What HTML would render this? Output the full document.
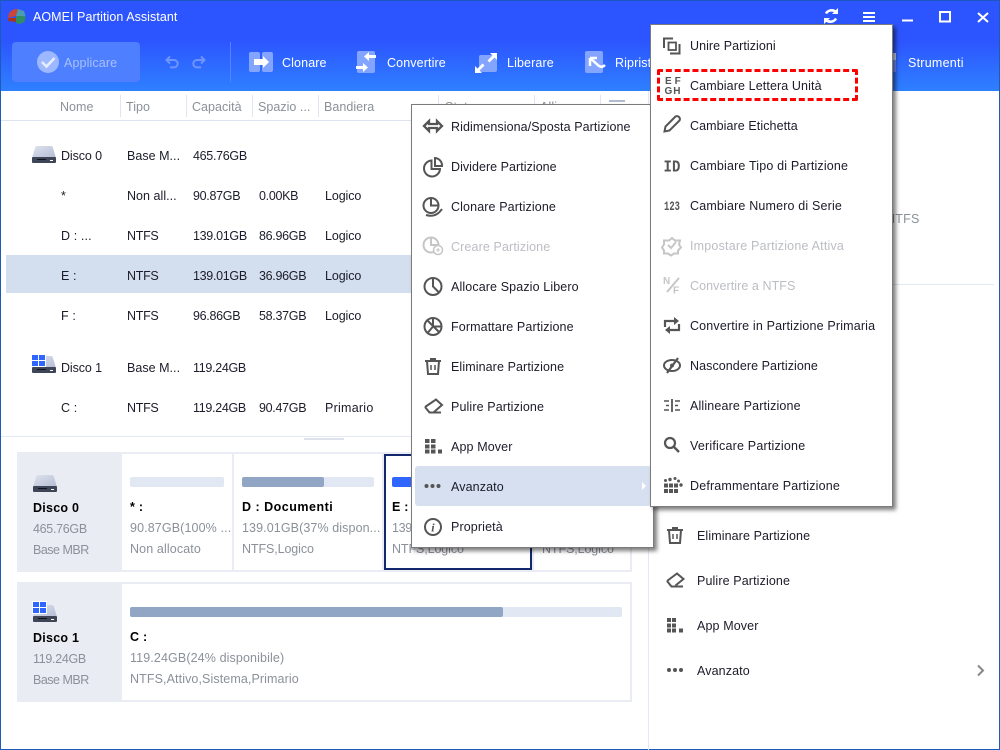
<!DOCTYPE html>
<html><head><meta charset="utf-8"><title>AOMEI Partition Assistant</title>
<style>
html,body{margin:0;padding:0;background:#fff}
#w{position:relative;width:1000px;height:750px;overflow:hidden;background:#fff;font-family:"Liberation Sans",sans-serif;font-size:12.5px;color:#1c1c2a;letter-spacing:.12px}
#w div{position:absolute}
.t{position:absolute;white-space:nowrap;line-height:16px;margin-top:1px}
.g{color:#8b9099}
.b{font-weight:bold;color:#000;letter-spacing:.25px}
.w{color:#fff}
.d{color:#bcbec4}
.n{letter-spacing:-.3px}
.c{letter-spacing:-.1px}
.h{letter-spacing:.03px}
svg{position:absolute;left:0;top:0}
.m{background:#fff;border:1px solid #7b7b7b;box-sizing:border-box;box-shadow:3px 3px 4px rgba(0,0,0,.5)}
</style></head><body><div id="w">
<div style="left:0;top:0;width:1000px;height:91px;background:linear-gradient(#2d55ff 0,#2d55ff 45%,#2e80ff 100%)"></div>
<div style="left:0;top:0;width:1000px;height:1px;background:#1c57c0"></div>
<div style="left:0;top:0;width:1px;height:750px;background:#1b5cb8"></div>
<div style="left:999px;top:0;width:1px;height:750px;background:#1b5cb8"></div>
<div style="left:0;top:749px;width:1000px;height:1px;background:#1b5cb8"></div>

<span class="t w" style="left:33px;top:8px;letter-spacing:.05px">AOMEI Partition Assistant</span>
<div style="left:12px;top:42px;width:128px;height:40px;background:#4d7fff;border-radius:4px"></div>
<span class="t" style="left:64px;top:54px;color:#a9c0ff">Applicare</span>
<span class="t w" style="left:282px;top:54px">Clonare</span>
<span class="t w" style="left:387px;top:54px">Convertire</span>
<span class="t w" style="left:507px;top:54px">Liberare</span>
<span class="t w" style="left:615px;top:54px">Ripristino</span>
<span class="t w" style="left:908px;top:54px;letter-spacing:.25px">Strumenti</span>

<svg width="1000" height="750" viewBox="0 0 1000 750" fill="none">
<defs><linearGradient id="dk" x1="0" y1="0" x2="1" y2="1"><stop offset="0" stop-color="#dfe3ee"/><stop offset="1" stop-color="#b4bcd4"/></linearGradient></defs>
<path d="M16 16L8 18 9 13 13 9.500 18 9Z" fill="#c9473a"/><path d="M8 18H16V22L8 21Z" fill="#a8351f"/><path d="M18 9L24 11 25.500 16H16Z" fill="#4a9cb0"/><path d="M16 16H25.500L24.500 22 19 24 16 23Z" fill="#2f8f62"/>
<circle cx="48" cy="62" r="11" fill="#9db8ff"/><path d="M42 62l4.500 4.500 8-8.500" stroke="#e6edff" stroke-width="2.600"/>
<path d="M167 60h7a3.700 3.700 0 0 1 0 7.400h-4M170 56.500l-3.500 3.500 3.500 3.500" stroke="#6f93ff" stroke-width="2"/>
<path d="M204 60h-7a3.700 3.700 0 0 0 0 7.400h4M201 56.500l3.500 3.500-3.500 3.500" stroke="#6f93ff" stroke-width="2"/>
<rect x="230" y="42" width="1" height="40" fill="#5a82ff"/>
<rect x="249" y="52" width="11" height="20" rx="2" fill="#83a5ff"/><rect x="262" y="52" width="11" height="20" rx="2" fill="#83a5ff"/><path d="M254 59h9v-3l6 6-6 6v-3h-9z" fill="#fff"/>
<rect x="357" y="51" width="18" height="22" rx="2" fill="#83a5ff"/><path d="M376 55h-7v-3l-5 4.500 5 4.500v-3h7zM356 66h7v-3l5 4.500-5 4.500v-3h-7z" fill="#fff"/>
<rect x="479" y="55" width="18" height="17" rx="2" fill="#83a5ff"/><path d="M497 53v7l-2.500-2.500-5 5-2-2 5-5-2.500-2.500zM475 73v-7l2.500 2.500 5-5 2 2-5 5 2.500 2.500z" fill="#fff"/>
<rect x="585" y="51" width="18" height="22" rx="2" fill="#83a5ff"/><path d="M590 58v8M590 58h7M590 58l9 8q3 2 6-1" stroke="#fff" stroke-width="2.500"/>
<rect x="893" y="53" width="3" height="19" fill="#6f93ff"/><rect x="893" y="53" width="3" height="7" fill="#c9d6f5"/>
<path d="M836 12a6.500 6.500 0 0 0-10 1.500M826 20a6.500 6.500 0 0 0 10-1.500" stroke="#fff" stroke-width="2.600"/><path d="M838 8v6h-6zM824 24v-6h6z" fill="#fff"/>
<path d="M863 13h12M863 17h12M863 21h12" stroke="#fff" stroke-width="2"/>
<path d="M902 20.500h11" stroke="#fff" stroke-width="2"/>
<rect x="940" y="12" width="10" height="9.500" stroke="#fff" stroke-width="2"/>
<path d="M978 13l10 9M988 13l-10 9" stroke="#fff" stroke-width="2"/>

<path d="M120.500 95v22M186.500 95v22M252.500 95v22M318.500 95v22M438.500 95v22M534.500 95v22M600.500 95v22" stroke="#dfe6f2"/>
<path d="M1 120.500H648" stroke="#dde4f0"/>
<rect x="609" y="100" width="16" height="2" fill="#b3bad0"/>
<rect x="6" y="255" width="405" height="38" fill="#d3deee"/>
<path d="M1 436.500H648" stroke="#e2e8f4"/><rect x="304" y="438" width="40" height="2" fill="#dde2ec"/>
<path d="M648.500 91V750" stroke="#e2e8f4"/>
<path d="M893 284.500H994" stroke="#e2e8f4"/>

<g><path d="M35 148q.5-2 2-2h14q1.500 0 2 2l3 10H32z" fill="url(#dk)"/><rect x="32" y="157" width="24" height="6" rx="1" fill="#3e4557"/><rect x="37" y="159" width="9" height="1" fill="#10131d"/><rect x="50" y="160" width="3" height="1" fill="#fff"/></g>
<g><path d="M35 358q.5-2 2-2h14q1.500 0 2 2l3 10H32z" fill="url(#dk)"/><rect x="32" y="367" width="24" height="6" rx="1" fill="#3e4557"/><rect x="37" y="369" width="9" height="1" fill="#10131d"/><rect x="50" y="370" width="3" height="1" fill="#fff"/><rect x="31" y="354" width="15" height="13" fill="#fff"/><path d="M32 355h6v5h-6zM39 355h6v5h-6zM32 361h6v5h-6zM39 361h6v5h-6z" fill="#2f66ff"/></g>

<rect x="17" y="452" width="615" height="120" fill="#e9ecf3"/>
<rect x="122" y="454" width="110" height="116" fill="#fff"/><rect x="234" y="454" width="148" height="116" fill="#fff"/>
<rect x="385" y="455" width="146" height="114" fill="#fff" stroke="#14286e" stroke-width="2"/><rect x="534" y="454" width="96" height="116" fill="#fff"/>
<rect x="17" y="582" width="615" height="120" fill="#e9ecf3"/><rect x="122" y="584" width="508" height="116" fill="#fff"/>
<rect x="130" y="477" width="94" height="10" rx="2" fill="#e2e8f3"/>
<rect x="242" y="477" width="132" height="10" rx="2" fill="#e2e8f3"/><rect x="242" y="477" width="82" height="10" rx="2" fill="#91a5c4"/>
<rect x="392" y="477" width="60" height="10" rx="2" fill="#2f66ff"/>
<rect x="130" y="607" width="492" height="10" rx="2" fill="#e2e8f3"/><rect x="130" y="607" width="373" height="10" rx="2" fill="#91a5c4"/>
<g><path d="M36 477q.5-2 2-2h14q1.500 0 2 2l3 10H33z" fill="url(#dk)"/><rect x="33" y="486" width="24" height="6" rx="1" fill="#3e4557"/><rect x="38" y="488" width="9" height="1" fill="#10131d"/><rect x="51" y="489" width="3" height="1" fill="#fff"/></g>
<g><path d="M36 607q.5-2 2-2h14q1.500 0 2 2l3 10H33z" fill="url(#dk)"/><rect x="33" y="616" width="24" height="6" rx="1" fill="#3e4557"/><rect x="38" y="618" width="9" height="1" fill="#10131d"/><rect x="51" y="619" width="3" height="1" fill="#fff"/><rect x="32" y="601" width="15" height="13" fill="#fff"/><path d="M33 602h6v5h-6zM40 602h6v5h-6zM33 608h6v5h-6zM40 608h6v5h-6z" fill="#2f66ff"/></g>

<g stroke="#555" stroke-width="2">
<path d="M667 530h16M672 528h6M669 530l1 13h10l1-13"/><path d="M673 534v5M677 534v5" stroke-width="1.500"/>
<path d="M667 581l10-7.500 6.500 5.500-8 6.500M667 581l4.500 5.500H683"/>
</g>
<g fill="#555"><rect x="667" y="618" width="4" height="4"/><rect x="672" y="618" width="4" height="4"/><rect x="667" y="623.500" width="4" height="4"/><rect x="672" y="623.500" width="4" height="4"/><rect x="667" y="628.500" width="4" height="4"/><rect x="672" y="628.500" width="4" height="4"/><rect x="679" y="628.500" width="4" height="4"/>
<circle cx="669" cy="670" r="2"/><circle cx="675" cy="670" r="2"/><circle cx="681" cy="670" r="2"/></g>
<path d="M978 665.500l5 5-5 5" stroke="#888" stroke-width="2"/>
</svg>

<span class="t g h" style="left:60px;top:98px">Nome</span><span class="t g h" style="left:126px;top:98px">Tipo</span><span class="t g h" style="left:192px;top:98px">Capacità</span><span class="t g h" style="left:258px;top:98px">Spazio ...</span><span class="t g h" style="left:324px;top:98px">Bandiera</span><span class="t g" style="left:445px;top:98px">Stato</span><span class="t g" style="left:540px;top:98px">Allin</span>

<span class="t c" style="left:61px;top:147px">Disco 0</span><span class="t h" style="left:127px;top:147px">Base M...</span><span class="t n" style="left:193px;top:147px">465.76GB</span>
<span class="t" style="left:61px;top:187px">*</span><span class="t h" style="left:127px;top:187px">Non all...</span><span class="t n" style="left:193px;top:187px">90.87GB</span><span class="t n" style="left:259px;top:187px">0.00KB</span><span class="t c" style="left:325px;top:187px">Logico</span>
<span class="t" style="left:61px;top:227px">D : ...</span><span class="t n" style="left:127px;top:227px">NTFS</span><span class="t n" style="left:193px;top:227px">139.01GB</span><span class="t n" style="left:259px;top:227px">86.96GB</span><span class="t c" style="left:325px;top:227px">Logico</span>
<span class="t" style="left:61px;top:267px">E :</span><span class="t n" style="left:127px;top:267px">NTFS</span><span class="t n" style="left:193px;top:267px">139.01GB</span><span class="t n" style="left:259px;top:267px">36.96GB</span><span class="t c" style="left:325px;top:267px">Logico</span>
<span class="t" style="left:61px;top:307px">F :</span><span class="t n" style="left:127px;top:307px">NTFS</span><span class="t n" style="left:193px;top:307px">96.86GB</span><span class="t n" style="left:259px;top:307px">58.37GB</span><span class="t c" style="left:325px;top:307px">Logico</span>
<span class="t c" style="left:61px;top:359px">Disco 1</span><span class="t h" style="left:127px;top:359px">Base M...</span><span class="t n" style="left:193px;top:359px">119.24GB</span>
<span class="t" style="left:61px;top:399px">C :</span><span class="t n" style="left:127px;top:399px">NTFS</span><span class="t n" style="left:193px;top:399px">119.24GB</span><span class="t n" style="left:259px;top:399px">90.47GB</span><span class="t" style="left:325px;top:399px;letter-spacing:.25px">Primario</span>

<span class="t b" style="left:33px;top:499px">Disco 0</span><span class="t g n" style="left:33px;top:520px">465.76GB</span><span class="t g" style="left:33px;top:541px;letter-spacing:-.5px">Base MBR</span>
<span class="t b" style="left:33px;top:629px">Disco 1</span><span class="t g n" style="left:33px;top:650px">119.24GB</span><span class="t g" style="left:33px;top:671px;letter-spacing:-.5px">Base MBR</span>
<span class="t b" style="left:130px;top:498px">* :</span><span class="t g" style="left:130px;top:519px">90.87GB(100% ...</span><span class="t g" style="left:130px;top:540px">Non allocato</span>
<span class="t b" style="left:242px;top:498px;letter-spacing:.5px">D : Documenti</span><span class="t g" style="left:242px;top:519px;letter-spacing:.1px">139.01GB(37% dispon...</span><span class="t g c" style="left:242px;top:540px">NTFS,Logico</span>
<span class="t b" style="left:392px;top:498px">E :</span><span class="t g n" style="left:392px;top:519px">139.01GB</span><span class="t g c" style="left:392px;top:540px">NTFS,Logico</span><span class="t g c" style="left:542px;top:540px">NTFS,Logico</span>
<span class="t b" style="left:130px;top:628px">C :</span><span class="t g" style="left:130px;top:649px">119.24GB(24% disponibile)</span><span class="t g" style="left:130px;top:670px;letter-spacing:.1px">NTFS,Attivo,Sistema,Primario</span>

<span class="t g" style="left:886px;top:210px;letter-spacing:.25px">NTFS</span>
<span class="t" style="left:697px;top:527px;letter-spacing:.1px">Eliminare Partizione</span><span class="t" style="left:697px;top:572px">Pulire Partizione</span><span class="t" style="left:697px;top:617px">App Mover</span><span class="t" style="left:697px;top:662px">Avanzato</span>

<!-- first menu -->
<div class="m" style="left:411px;top:104px;width:243px;height:444px"></div>
<div style="left:415px;top:466px;width:236px;height:40px;background:#d7e0f0;border-radius:3px"></div>
<span class="t" style="left:451px;top:118px;letter-spacing:.08px">Ridimensiona/Sposta Partizione</span>
<span class="t" style="left:451px;top:158px;letter-spacing:.04px">Dividere Partizione</span>
<span class="t" style="left:451px;top:198px">Clonare Partizione</span>
<span class="t d" style="left:451px;top:238px">Creare Partizione</span>
<span class="t" style="left:451px;top:278px">Allocare Spazio Libero</span>
<span class="t" style="left:451px;top:318px">Formattare Partizione</span>
<span class="t" style="left:451px;top:358px;letter-spacing:.1px">Eliminare Partizione</span>
<span class="t" style="left:451px;top:398px">Pulire Partizione</span>
<span class="t" style="left:451px;top:438px">App Mover</span>
<span class="t" style="left:451px;top:478px">Avanzato</span>
<span class="t" style="left:451px;top:518px">Proprietà</span>
<svg width="1000" height="750" viewBox="0 0 1000 750" fill="none">
<g stroke="#555" stroke-width="2">
<path d="M424 126l5-5v3h8v-3l5 5-5 5v-3h-8v3z" stroke-width="2.300"/>
<path d="M431.500 160.500a8 8 0 1 0 8.500 8.500h-8.500z"/><path d="M435 158a7.500 7.500 0 0 1 7 8h-7z"/>
<circle cx="431" cy="205.500" r="7.500"/><path d="M431 198v7.500h7.500M426 215q10 3 16-6"/>
<g stroke="#c6c6c6"><circle cx="431" cy="245" r="7.500"/><path d="M431 237.500v7.500h7.500"/><circle cx="438" cy="250" r="4.500" fill="#fff" stroke-width="1.500"/><path d="M436 250h4M438 248v4" stroke-width="1"/></g>
<circle cx="433" cy="286.500" r="8.500"/><path d="M433 278v8.500l6 6"/>
<circle cx="433" cy="326.500" r="8.500"/><path d="M433 318v8.500h8.500M427 320l12 12M433 326.500l-5 6"/>
<path d="M425 361h16M430 359h6M427 361l1 13h10l1-13"/><path d="M431 365v5M435 365v5" stroke-width="1.500"/>
<path d="M425 407l11-7.500 6 5.500-8 7M425 407l4.500 5.500H441"/>
</g>
<g fill="#555"><rect x="425" y="439" width="4.500" height="4"/><rect x="431" y="439" width="4.500" height="4"/><rect x="425" y="444.500" width="4.500" height="4"/><rect x="431" y="444.500" width="4.500" height="4"/><rect x="425" y="449.500" width="4.500" height="4"/><rect x="431" y="449.500" width="4.500" height="4"/><rect x="438" y="449.500" width="4" height="4"/>
<circle cx="426.500" cy="486" r="2"/><circle cx="432.500" cy="486" r="2"/><circle cx="438.500" cy="486" r="2"/></g>
<path d="M642 482l4 4-4 4z" fill="#fff"/>
<circle cx="433" cy="527" r="8" stroke="#555" stroke-width="2"/>
<text x="433" y="531.500" text-anchor="middle" font-family="Liberation Serif" font-style="italic" font-weight="bold" font-size="12" fill="#555">i</text>
</svg>

<!-- second menu -->
<div class="m" style="left:650px;top:24px;width:243px;height:483px"></div>
<div style="left:657px;top:69px;width:201px;height:32px;box-sizing:border-box;border:3px dashed #f00;border-radius:2px"></div>
<span class="t" style="left:690px;top:37px;letter-spacing:.06px">Unire Partizioni</span>
<span class="t" style="left:690px;top:77px;letter-spacing:.11px">Cambiare Lettera Unità</span>
<span class="t" style="left:690px;top:117px;letter-spacing:.08px">Cambiare Etichetta</span>
<span class="t" style="left:690px;top:157px;letter-spacing:.17px">Cambiare Tipo di Partizione</span>
<span class="t" style="left:690px;top:197px;letter-spacing:.17px">Cambiare Numero di Serie</span>
<span class="t d" style="left:690px;top:237px;letter-spacing:.2px">Impostare Partizione Attiva</span>
<span class="t d" style="left:690px;top:277px;letter-spacing:.07px">Convertire a NTFS</span>
<span class="t" style="left:690px;top:317px;letter-spacing:.16px">Convertire in Partizione Primaria</span>
<span class="t" style="left:690px;top:357px;letter-spacing:.07px">Nascondere Partizione</span>
<span class="t" style="left:690px;top:397px;letter-spacing:.15px">Allineare Partizione</span>
<span class="t" style="left:690px;top:437px;letter-spacing:.2px">Verificare Partizione</span>
<span class="t" style="left:690px;top:477px;letter-spacing:.17px">Deframmentare Partizione</span>
<svg width="1000" height="750" viewBox="0 0 1000 750" fill="none">
<g stroke="#555" stroke-width="2">
<path d="M664 48V38.500H673M679.500 44v9.500H670"/><rect x="668.500" y="42.500" width="7.500" height="7.500" stroke-width="1.800"/>
<path d="M664.500 131.500l1-5 10-10q2-1 3.500.5t.5 3.500l-10 10z"/>
<path d="M665 327v-6h10M679 324v6h-10" stroke-width="2.200"/>
<ellipse cx="672" cy="365.500" rx="8" ry="5.500"/><circle cx="672" cy="365.500" r="2" fill="#555" stroke="none"/><path d="M667 373l11-15" stroke-width="2.200"/>
<path d="M664 401h5M666 405.500h3M664 410h5M675 401h5M675 405.500h3M675 410h5" stroke-width="1.600"/><path d="M672 399v13" stroke-width="1.800"/>
<circle cx="670" cy="443" r="5" stroke-width="2.200"/><path d="M674 447l5 5" stroke-width="2.400"/>
<g stroke="#c6c6c6"><path d="M672 238l3 2.500h5l-1 4 2 3-3 3v3h-4l-3 2-3-2h-4v-3l-2-3 2-3v-4h5z"/><path d="M668 245l3 3 5-6"/></g>
</g>
<path d="M674 317l5 4-5 4zM670 326l-5 4 5 4z" fill="#555"/>
<g fill="#555"><circle cx="665.500" cy="480.500" r="1.500"/><circle cx="670" cy="479.500" r="1.700"/><circle cx="675" cy="478.500" r="1.500"/><circle cx="678.500" cy="481" r="1.500"/><rect x="664" y="483.500" width="4" height="4"/><rect x="669" y="483.500" width="4" height="4"/><rect x="674" y="483.500" width="4" height="4"/><circle cx="681" cy="485" r="1.700"/><rect x="664" y="489" width="4" height="4"/><rect x="669" y="489" width="4" height="4"/><rect x="674" y="489" width="4" height="4"/></g>
<g font-family="Liberation Sans" font-weight="bold" fill="#555">
<text x="665" y="84" font-size="10" letter-spacing="3">EF</text><text x="664.500" y="94" font-size="10" letter-spacing="1">GH</text>
<text x="664" y="210" font-family="Liberation Mono" font-size="13" textLength="16" lengthAdjust="spacingAndGlyphs">123</text>
<text x="663.500" y="171.500" font-family="Liberation Mono" font-size="17" textLength="17" lengthAdjust="spacingAndGlyphs">ID</text>
<text x="663" y="284" font-size="10" fill="#c6c6c6">N</text><text x="673" y="293.500" font-size="10" fill="#c6c6c6">F</text>
</g>
<path d="M667 292l12-14" stroke="#c6c6c6" stroke-width="2"/>
</svg>
</div></body></html>
